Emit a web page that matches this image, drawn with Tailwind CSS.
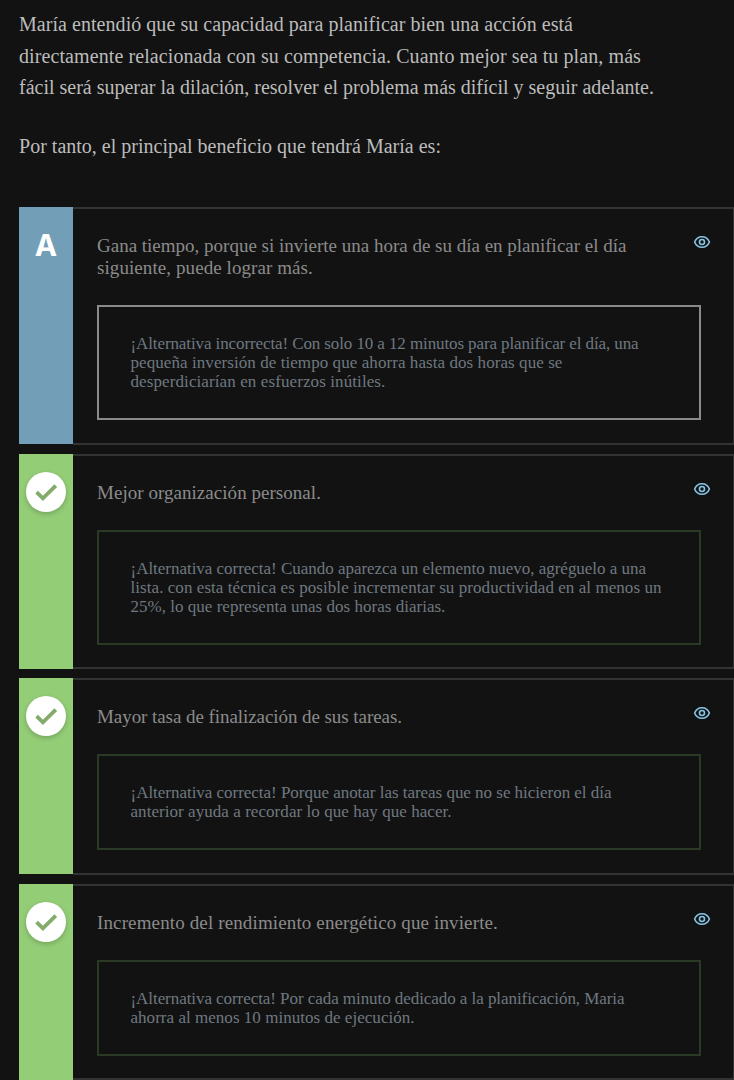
<!DOCTYPE html>
<html lang="es">
<head>
<meta charset="utf-8">
<title>Planificación</title>
<script src="https://cdn.jsdelivr.net/npm/@tailwindcss/browser@4"></script>
</head>
<body class="h-[1080px] overflow-hidden bg-[#121212] font-['Liberation_Serif',serif]">
<svg class="hidden">
  <symbol id="eye" viewBox="0 0 18 14"><g fill="none" stroke="currentColor" stroke-width="1.6"><path d="M1.600 7C3 3.500 5.700 1.700 9 1.700S15 3.500 16.400 7C15 10.500 12.300 12.300 9 12.300S3 10.500 1.600 7Z" stroke-linejoin="round"/><circle cx="9" cy="7" r="2.500"/></g></symbol>
  <symbol id="check" viewBox="0 0 30 30"><path fill="none" stroke="currentColor" stroke-width="3.800" d="M5.600 15.200L11.900 21.300L24.800 8.600"/></symbol>
</svg>
<main class="w-[735px] pl-[19px] pt-[9px]">
  <section class="text-[20px] leading-[31.5px] whitespace-nowrap text-[#bcbcbc]">
    <p class="h-[122px]">
      <span class="block tracking-[0.047px]">María entendió que su capacidad para planificar bien una acción está</span>
      <span class="block tracking-[0.090px]">directamente relacionada con su competencia. Cuanto mejor sea tu plan, más</span>
      <span class="block tracking-[-0.004px]">fácil será superar la dilación, resolver el problema más difícil y seguir adelante.</span>
    </p>
    <p class="h-[76px] tracking-[0.008px]">Por tanto, el principal beneficio que tendrá María es:</p>
  </section>

  <article class="flex h-[237px] mb-[10px] whitespace-nowrap">
    <div class="w-[54px] shrink-0 bg-[#729fb7] pt-[18px] flex justify-center"><span class="h-10 font-['Inter',sans-serif] text-[30px] leading-10 font-bold text-white">A</span></div>
    <div class="flex-1 min-w-0 -mb-px border-y-2 border-r-2 border-[#333] pl-6 pt-[25px]">
      <div class="flex justify-between w-[614px]">
        <h2 class="pt-px text-[19px] leading-[22px] text-[#8b8b8b]"><span class="block tracking-[-0.003px]">Gana tiempo, porque si invierte una hora de su día en planificar el día</span><span class="block tracking-[0.080px]">siguiente, puede lograr más.</span></h2>
        <svg class="w-[18px] h-[14px] mt-px text-[#86c5e6]"><use href="#eye"/></svg>
      </div>
      <div class="mt-[26px] w-[604px] border-2 border-[#8a8a8a] pl-[31.500px] pt-[27px] h-[115px] text-[17px] leading-[19px] text-[#6f7880]">
        <span class="block tracking-[-0.103px]">¡Alternativa incorrecta! Con solo 10 a 12 minutos para planificar el día, una</span>
        <span class="block tracking-[0.070px]">pequeña inversión de tiempo que ahorra hasta dos horas que se</span>
        <span class="block tracking-[0.100px]">desperdiciarían en esfuerzos inútiles.</span>
      </div>
    </div>
  </article>

  <article class="flex h-[215px] mb-[9px] whitespace-nowrap">
    <div class="w-[54px] shrink-0 bg-[#93cd76] pt-[18px] flex justify-center"><span class="flex size-10 items-center justify-center rounded-full bg-white shadow-[0_2px_5px_rgba(0,0,0,0.2)]"><svg class="size-[30px] text-[#82ab6c]"><use href="#check"/></svg></span></div>
    <div class="flex-1 min-w-0 border-y-2 border-r-2 border-[#333] pl-6 pt-[25px]">
      <div class="flex justify-between w-[614px]">
        <h2 class="pt-px text-[19px] leading-[22px] text-[#8b8b8b] tracking-[0.040px]">Mejor organización personal.</h2>
        <svg class="w-[18px] h-[14px] mt-px text-[#86c5e6]"><use href="#eye"/></svg>
      </div>
      <div class="mt-[26px] w-[604px] border-2 border-[#2b3a24] pl-[31.500px] pt-[27px] h-[115px] text-[17px] leading-[19px] text-[#6f7880]">
        <span class="block tracking-[-0.025px]">¡Alternativa correcta! Cuando aparezca un elemento nuevo, agréguelo a una</span>
        <span class="block tracking-[0.060px]">lista. con esta técnica es posible incrementar su productividad en al menos un</span>
        <span class="block tracking-[0.020px]">25%, lo que representa unas dos horas diarias.</span>
      </div>
    </div>
  </article>

  <article class="flex h-[196px] mb-[10px] whitespace-nowrap">
    <div class="w-[54px] shrink-0 bg-[#93cd76] pt-[18px] flex justify-center"><span class="flex size-10 items-center justify-center rounded-full bg-white shadow-[0_2px_5px_rgba(0,0,0,0.2)]"><svg class="size-[30px] text-[#82ab6c]"><use href="#check"/></svg></span></div>
    <div class="flex-1 min-w-0 -mb-px border-y-2 border-r-2 border-[#333] pl-6 pt-[25px]">
      <div class="flex justify-between w-[614px]">
        <h2 class="pt-px text-[19px] leading-[22px] text-[#8b8b8b] tracking-[-0.065px]">Mayor tasa de finalización de sus tareas.</h2>
        <svg class="w-[18px] h-[14px] mt-px text-[#86c5e6]"><use href="#eye"/></svg>
      </div>
      <div class="mt-[26px] w-[604px] border-2 border-[#2b3a24] pl-[31.500px] pt-[27px] h-[96px] text-[17px] leading-[19px] text-[#6f7880]">
        <span class="block tracking-[-0.026px]">¡Alternativa correcta! Porque anotar las tareas que no se hicieron el día</span>
        <span class="block tracking-[0.053px]">anterior ayuda a recordar lo que hay que hacer.</span>
      </div>
    </div>
  </article>

  <article class="flex h-[196px] whitespace-nowrap">
    <div class="w-[54px] shrink-0 bg-[#93cd76] pt-[18px] flex justify-center"><span class="flex size-10 items-center justify-center rounded-full bg-white shadow-[0_2px_5px_rgba(0,0,0,0.2)]"><svg class="size-[30px] text-[#82ab6c]"><use href="#check"/></svg></span></div>
    <div class="flex-1 min-w-0 border-y-2 border-r-2 border-[#333] pl-6 pt-[25px]">
      <div class="flex justify-between w-[614px]">
        <h2 class="pt-px text-[19px] leading-[22px] text-[#8b8b8b] tracking-[0.132px]">Incremento del rendimiento energético que invierte.</h2>
        <svg class="w-[18px] h-[14px] mt-px text-[#86c5e6]"><use href="#eye"/></svg>
      </div>
      <div class="mt-[26px] w-[604px] border-2 border-[#2b3a24] pl-[31.500px] pt-[27px] h-[96px] text-[17px] leading-[19px] text-[#6f7880]">
        <span class="block tracking-[-0.061px]">¡Alternativa correcta! Por cada minuto dedicado a la planificación, Maria</span>
        <span class="block tracking-[0.032px]">ahorra al menos 10 minutos de ejecución.</span>
      </div>
    </div>
  </article>
</main>
</body>
</html>
